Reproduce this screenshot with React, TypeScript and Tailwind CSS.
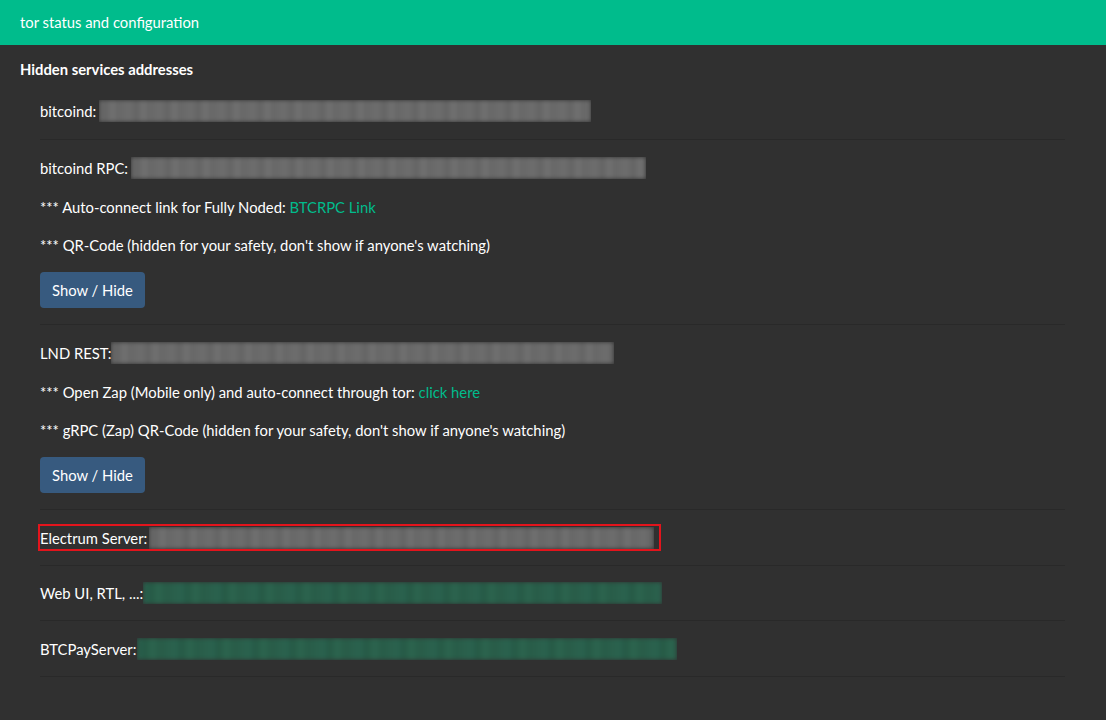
type Address = {
  label: string;
  width: number;
  tone: "gray" | "green";
  h?: string;
  gap?: string;
};

function Blurred({
  width,
  tone,
  gap = "ml-[3px]",
}: {
  width: number;
  tone: "gray" | "green";
  gap?: string;
}) {
  return (
    <span className={["inline-block h-[22px] shrink-0 overflow-hidden", gap].join(" ")} style={{ width }}>
      <span
        className={[
          "block h-full w-full blur-[2px]",
          tone === "gray"
            ? "bg-[repeating-linear-gradient(90deg,#6c6c6c_0px,#636363_7px,#727272_13px,#676767_19px,#6e6e6e_31px)]"
            : "bg-[repeating-linear-gradient(90deg,#2a6350_0px,#265945_8px,#2c654f_15px,#285c48_23px,#2b624e_37px)]",
        ].join(" ")}
      />
    </span>
  );
}

function AddressLine({ label, width, tone, h = "h-[24px]", gap }: Address) {
  return (
    <div className={["flex items-center", h].join(" ")}>
      <span>{label}</span>
      <Blurred width={width} tone={tone} gap={gap} />
    </div>
  );
}

function ShowHide() {
  return (
    <button className="h-[36px] rounded-[4px] bg-[#375a7f] px-[12px] text-white">
      Show / Hide
    </button>
  );
}

function Item({ children }: { children: React.ReactNode }) {
  return <li className="border-b border-[#292929] py-[16px]">{children}</li>;
}

export default function App() {
  return (
    <div
      className="min-h-[720px] bg-[#303030] text-[14.8px] leading-[22px] text-white"
      style={{ fontFamily: "Lato, 'Open Sans', sans-serif" }}
    >
      <div className="flex h-[45px] items-center bg-[#00bc8c] px-[20px] pb-[1px]">
        tor status and configuration
      </div>

      <div className="px-[20px] pt-[13px]">
        <h2 className="mb-[3px] font-bold">Hidden services addresses</h2>

        <ul className="mr-[21px] pl-[20px]">
          <Item>
            <AddressLine label="bitcoind:" width={492} tone="gray" />
          </Item>

          <Item>
            <AddressLine label="bitcoind RPC:" width={515} tone="gray" />
            <p className="mt-[16px]">
              *** Auto-connect link for Fully Noded:{" "}
              <a className="text-[#00bc8c]">BTCRPC Link</a>
            </p>
            <p className="mt-[16px]">
              *** QR-Code (hidden for your safety, don't show if anyone's watching)
            </p>
            <div className="mt-[16px]">
              <ShowHide />
            </div>
          </Item>

          <Item>
            <AddressLine label="LND REST:" width={503} tone="gray" gap="ml-0" />
            <p className="mt-[16px]">
              *** Open Zap (Mobile only) and auto-connect through tor:{" "}
              <a className="text-[#00bc8c]">click here</a>
            </p>
            <p className="mt-[16px]">
              *** gRPC (Zap) QR-Code (hidden for your safety, don't show if anyone's watching)
            </p>
            <div className="mt-[16px]">
              <ShowHide />
            </div>
          </Item>

          <Item>
            <div className="inline-flex h-[23px] items-center pr-[5px] outline-2 outline-[#e3141c]">
              <span>Electrum Server:</span>
              <Blurred width={505} tone="gray" gap="ml-[2px]" />
            </div>
          </Item>

          <Item>
            <AddressLine label="Web UI, RTL, ...:" width={519} tone="green" h="h-[22px]" gap="ml-0" />
          </Item>

          <Item>
            <AddressLine label="BTCPayServer:" width={540} tone="green" h="h-[23px]" gap="ml-[1px]" />
          </Item>
        </ul>
      </div>
    </div>
  );
}
